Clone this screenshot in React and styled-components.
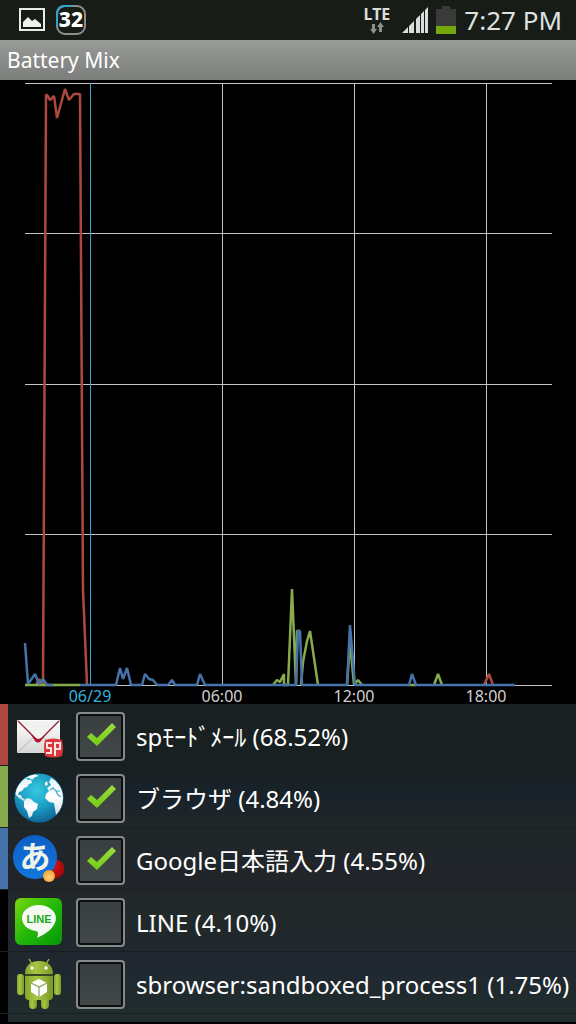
import React, { useState } from "react";
import styled, { createGlobalStyle } from "styled-components";

const COLORS = {
  red: "#ae483f",
  green: "#87aa4d",
  blue: "#4573a9",
  cyan: "#36a5d0",
  grid: "#c4c4c4",
};

const GRID_Y = [3, 153, 304, 454, 605];

const TICKS = [
  { x: 90, label: "06/29", active: true },
  { x: 222, label: "06:00" },
  { x: 354, label: "12:00" },
  { x: 486, label: "18:00" },
];

const SERIES = [
  {
    color: COLORS.red,
    d: "M36 605L39 599L43 604L46 15L47 15L50 20L54 16L57 38L65 9L69 20L74 14H80L83 510L87 605M484 605L489 594L493 605",
  },
  {
    color: COLORS.green,
    d: "M25 605H80M273 605L277 600L280 602L284 594V605H288L292 509L296 605L297 551L300 551M301 605L303 582L307 561L310 551L318 605M347 605L350 562L354 605L358 600L362 605M409 605H416M434 605L438 594L442 605",
  },
  {
    color: COLORS.blue,
    d: "M25 563L28 604L35 594L39 604L43 599L47 605H53M80 605H116L120 588L123 599L127 588L131 605M142 605L145 594L149 599L153 600L157 605M168 605L172 600L175 605M197 605L200 594L205 605M131 605H142M157 605H168M175 605H197M205 605H296L298 551H300L302 605H347L350 545L355 605H409L412 594L416 605H515",
  },
];

function MailIcon() {
  return (
    <Icon viewBox="0 0 52 52" aria-hidden="true">
      <defs>
        <linearGradient id="paper" x1="0" y1="0" x2="0" y2="1">
          <stop offset="0" stopColor="#ffffff" />
          <stop offset="1" stopColor="#d6d6d4" />
        </linearGradient>
      </defs>
      <rect x="4" y="9" width="43" height="33" rx="1" fill="url(#paper)" />
      <path d="M5 41L21 26M46 41L30 26" stroke="#b9b9b7" strokeWidth="1" />
      <path d="M5 10L21 27Q25 31 29 27L46 10Z" fill="#f1f1ef" />
      <path
        d="M5 10L22 27Q25 30 29 27L46 10"
        fill="none"
        stroke="#8e1230"
        strokeWidth="1.2"
      />
      <path d="M17 22L22 27Q25 30 29 27L34 22L28 30Q25 33 22 30Z" fill="#b3122f" />
      <path d="M32 29Q40 26 49 29Q51 37 49 45Q40 48 32 45Q30 37 32 29Z" fill="#da363c" />
      <path
        d="M39 32H34V37H38V42H33M42 45V32H47V38H42"
        fill="none"
        stroke="#ffe3df"
        strokeWidth="2"
      />
    </Icon>
  );
}

function GlobeIcon() {
  return (
    <Icon viewBox="0 0 52 52" aria-hidden="true">
      <defs>
        <radialGradient id="sea" cx="0.45" cy="0.35" r="0.7">
          <stop offset="0" stopColor="#35cbe0" />
          <stop offset="0.55" stopColor="#1a98c0" />
          <stop offset="1" stopColor="#0d5e91" />
        </radialGradient>
        <linearGradient id="land" x1="0" y1="0" x2="0" y2="1">
          <stop offset="0" stopColor="#e4f3f7" />
          <stop offset="0.5" stopColor="#ffffff" />
          <stop offset="1" stopColor="#cfdfe9" />
        </linearGradient>
        <clipPath id="globe">
          <circle cx="26" cy="25" r="24" />
        </clipPath>
      </defs>
      <circle cx="26" cy="25" r="24.5" fill="url(#sea)" />
      <g clipPath="url(#globe)" fill="url(#land)">
        <path d="M3 17L5 11L9 7L13 5L15 7L18 7L19 10L16 11L14 14L11 15L9 18L6 19L5 22L8 22L9 25L12 26L11 28L6 25L2 21Z" />
        <path d="M11 28L14 25L18 26L21 29L25 31L24 36L20 39L19 43L16 45L14 38L11 34Z" />
        <path d="M11 5L16 2L22 1L26 3L22 4L19 7L16 5Z" />
        <path d="M33 21L36 18L34 15L38 12L36 9L38 5L43 8L48 14L51 23L50 32L46 41L43 42L42 36L41 30L36 29L32 25Z" />
        <path d="M32 10L34 8L35 12L32 13Z" />
      </g>
      <path
        d="M37 17L40 15L43 18L47 18M43 18L45 22L48 24"
        fill="none"
        stroke="#3ba8c8"
        strokeWidth="1.2"
      />
    </Icon>
  );
}

function KanaIcon() {
  return (
    <Icon viewBox="0 0 52 52" aria-hidden="true">
      <defs>
        <linearGradient id="kana" x1="0" y1="0" x2="0" y2="1">
          <stop offset="0" stopColor="#0d5fc4" />
          <stop offset="1" stopColor="#1177dc" />
        </linearGradient>
        <radialGradient id="ruby" cx="0.4" cy="0.3" r="0.7">
          <stop offset="0" stopColor="#d91515" />
          <stop offset="1" stopColor="#9b0808" />
        </radialGradient>
        <radialGradient id="amber" cx="0.5" cy="0.6" r="0.6">
          <stop offset="0" stopColor="#ffd27a" />
          <stop offset="1" stopColor="#f2a02f" />
        </radialGradient>
      </defs>
      <circle cx="42" cy="34" r="9.5" fill="url(#ruby)" />
      <circle cx="22" cy="22" r="22" fill="url(#kana)" />
      <KanaText x="22" y="33" textAnchor="middle">
        あ
      </KanaText>
      <circle cx="36" cy="41" r="6" fill="url(#amber)" />
    </Icon>
  );
}

function LineIcon() {
  return (
    <Icon viewBox="0 0 52 52" aria-hidden="true">
      <defs>
        <linearGradient id="lime" x1="0" y1="0" x2="1" y2="1">
          <stop offset="0" stopColor="#78d80c" />
          <stop offset="0.5" stopColor="#24b80a" />
          <stop offset="1" stopColor="#079707" />
        </linearGradient>
      </defs>
      <rect x="2" y="1" width="47" height="47" rx="6" fill="url(#lime)" />
      <path
        d="M26 8C16 8 9 14 9 21C9 28 15 33 23 34C26 35 25 38 24 41C33 37 43 30 43 21C43 14 35 8 26 8Z"
        fill="#f4faf2"
      />
      <LineText x="26" y="26" textAnchor="middle">
        LINE
      </LineText>
    </Icon>
  );
}

function AndroidIcon() {
  return (
    <Icon viewBox="0 0 52 52" aria-hidden="true">
      <defs>
        <linearGradient id="robot" x1="0" y1="0" x2="1" y2="0">
          <stop offset="0" stopColor="#84a52c" />
          <stop offset="0.4" stopColor="#a9c745" />
          <stop offset="1" stopColor="#789925" />
        </linearGradient>
      </defs>
      <path d="M19 5L16 0M33 5L36 0" stroke="#9ebd3b" strokeWidth="1.3" />
      <path d="M12 15C12 6 18 2 26 2S40 6 40 15Z" fill="url(#robot)" />
      <circle cx="19" cy="9" r="1.7" fill="#fff" />
      <circle cx="33" cy="9" r="1.7" fill="#fff" />
      <g fill="url(#robot)">
        <rect x="4" y="15" width="7" height="21" rx="3" />
        <rect x="41" y="15" width="7" height="21" rx="3" />
        <rect x="16" y="32" width="8" height="18" rx="4" />
        <rect x="28" y="32" width="8" height="18" rx="4" />
        <path d="M12 17H40V37Q40 41 36 41H16Q12 41 12 37Z" />
      </g>
      <path d="M12 16H40" stroke="#4e6519" strokeWidth="1" />
      <path d="M26 20L34 24V33L26 38L18 33V24Z" fill="#fff" />
      <path d="M18 24L26 28L34 24M26 28V38" fill="none" stroke="#8da25a" strokeWidth="1.2" />
    </Icon>
  );
}

function BlueIcon() {
  return (
    <Icon viewBox="0 0 52 52" aria-hidden="true">
      <rect x="4" y="1" width="44" height="47" rx="4" fill="#1f4663" />
    </Icon>
  );
}

const APPS = [
  { name: "spﾓｰﾄﾞﾒｰﾙ (68.52%)", color: COLORS.red, checked: true, icon: <MailIcon /> },
  { name: "ブラウザ (4.84%)", color: COLORS.green, checked: true, icon: <GlobeIcon /> },
  { name: "Google日本語入力 (4.55%)", color: COLORS.blue, checked: true, icon: <KanaIcon /> },
  { name: "LINE (4.10%)", icon: <LineIcon /> },
  { name: "sbrowser:sandboxed_process1 (1.75%)", icon: <AndroidIcon /> },
  { name: "", icon: <BlueIcon /> },
];

function StatusBar() {
  return (
    <Status>
      <StatusGroup $gap={11}>
        <svg width="26" height="24" viewBox="0 0 26 24" aria-hidden="true">
          <rect x="1" y="1" width="24" height="21" fill="none" stroke="#e8ebe8" strokeWidth="2" />
          <path d="M4 19V14L9 9L13 13L16 11L22 16V19Z" fill="#f0f2f0" />
        </svg>
        <CountBadge>
          <svg width="30" height="30" viewBox="0 0 30 30" aria-hidden="true">
            <rect x="1" y="1" width="28" height="28" rx="8" fill="none" stroke="#8b908e" strokeWidth="2" />
            <path d="M1 21V9Q1 1 9 1H16" fill="none" stroke="#35a3c8" strokeWidth="2" />
          </svg>
          <span>32</span>
        </CountBadge>
      </StatusGroup>
      <StatusGroup $gap={8}>
        <Network>
          <span>LTE</span>
          <svg width="16" height="12" viewBox="0 0 16 12" aria-hidden="true">
            <path d="M3 2H6V7H8L4.500 12L1 7H3Z" fill="#8c8f8d" />
            <path d="M10 10H13V5H15L11.500 0L8 5H10Z" fill="#8c8f8d" />
          </svg>
        </Network>
        <SignalIcon width="26" height="26" viewBox="0 0 26 26" aria-hidden="true">
          <path
            d="M0 26L6 20V26ZM7 19L12 14V26H7ZM14 12L18 8V26H14ZM19 7L22 4V26H19ZM23 3L26 0V26H23Z"
            fill="#dadddb"
          />
        </SignalIcon>
        <svg width="20" height="28" viewBox="0 0 20 28" aria-hidden="true">
          <path d="M0 3H6V0H14V3H20V21H0Z" fill="#3a3a3a" />
          <path d="M0 20H20V28H0Z" fill="#74a80c" />
        </svg>
        <Clock>7:27 PM</Clock>
      </StatusGroup>
    </Status>
  );
}

function UsageChart() {
  return (
    <Chart viewBox="0 0 576 624" role="img" aria-label="Battery usage">
      <g stroke={COLORS.grid} strokeWidth="1" shapeRendering="crispEdges">
        {GRID_Y.map((y) => (
          <path key={y} d={`M25 ${y}H552`} />
        ))}
        {TICKS.map((tick) => (
          <path
            key={tick.label}
            d={`M${tick.x} 3V605`}
            stroke={tick.active ? COLORS.cyan : COLORS.grid}
          />
        ))}
      </g>
      {SERIES.map((line) => (
        <path
          key={line.color}
          d={line.d}
          fill="none"
          stroke={line.color}
          strokeWidth="2.500"
          strokeLinejoin="bevel"
        />
      ))}
      {TICKS.map((tick) => (
        <TickLabel key={tick.label} x={tick.x} y="622" textAnchor="middle" $active={tick.active}>
          {tick.label}
        </TickLabel>
      ))}
    </Chart>
  );
}

function AppRow(props) {
  const [checked, setChecked] = useState(Boolean(props.app.checked));

  return (
    <AppItem>
      <Row $color={props.app.color}>
        {props.app.icon}
        <CheckWrap>
          <CheckBox
            type="checkbox"
            checked={checked}
            onChange={(e) => setChecked(e.target.checked)}
          />
          {checked && (
            <CheckMark viewBox="0 0 49 49" aria-hidden="true">
              <defs>
                <linearGradient id="tick" x1="0" y1="0" x2="0" y2="1">
                  <stop offset="0" stopColor="#9bdd3f" />
                  <stop offset="1" stopColor="#72cc14" />
                </linearGradient>
              </defs>
              <path d="M11 25L15 21L21 26L36 11L40 15L21 34Z" fill="url(#tick)" />
            </CheckMark>
          )}
        </CheckWrap>
        <AppName>{props.app.name}</AppName>
      </Row>
    </AppItem>
  );
}

function App() {
  return (
    <Screen>
      <GlobalStyle />
      <StatusBar />
      <TitleBar>Battery Mix</TitleBar>
      <UsageChart />
      <AppList>
        {APPS.map((app) => (
          <AppRow key={app.name} app={app} />
        ))}
      </AppList>
    </Screen>
  );
}

const GlobalStyle = createGlobalStyle`
  * {
    box-sizing: border-box;
  }
  body {
    margin: 0;
    background: #000;
    color: #fff;
    font-family: "Noto Sans", "Noto Sans CJK JP", sans-serif;
  }
`;

const Screen = styled.main`
  display: flex;
  flex-direction: column;
  height: 100vh;
  overflow: hidden;
  padding-bottom: 2px;
`;

const Status = styled.header`
  display: flex;
  flex: none;
  align-items: center;
  justify-content: space-between;
  height: 40px;
  padding: 0 14px 0 19px;
  background: #171c17;
`;

const StatusGroup = styled.div`
  display: flex;
  align-items: center;
  gap: ${(props) => props.$gap}px;
`;

const CountBadge = styled.div`
  position: relative;
  height: 30px;

  span {
    position: absolute;
    inset: 0;
    font-size: 21px;
    font-weight: 800;
    line-height: 28px;
    text-align: center;
  }
`;

const Network = styled.div`
  display: flex;
  flex-direction: column;
  align-items: center;
  gap: 1px;
  color: #dadddb;
  font-size: 16px;
  font-weight: 700;
  line-height: 14px;
`;

const SignalIcon = styled.svg`
  margin-left: 4px;
`;

const Clock = styled.time`
  color: #dfe2e0;
  font-size: 26px;
  line-height: 40px;
`;

const TitleBar = styled.h1`
  flex: none;
  height: 40px;
  margin: 0;
  padding: 0 7px;
  background: linear-gradient(#9a9c99, #8b8d8a 45%, #7c7e7b);
  font-size: 21px;
  font-weight: 400;
  line-height: 40px;
`;

const Chart = styled.svg`
  display: block;
  flex: none;
  width: 100%;
  height: auto;
  overflow: visible;
`;

const TickLabel = styled.text`
  fill: ${(props) => (props.$active ? "#36b3de" : "#d0d0d0")};
  font-size: 16px;
`;

const AppList = styled.ul`
  flex: 1;
  min-height: 0;
  margin: 0;
  padding: 0;
  overflow: hidden;
  list-style: none;
  background: linear-gradient(
    #192020,
    #182021 20%,
    #18222a 28%,
    #1f2628 38%,
    #21252a 56%,
    #212929 66%,
    #202730 80%,
    #202c2e 95%
  );
`;

const AppItem = styled.li`
  border-bottom: 1px solid #191e20;
`;

const Row = styled.label`
  display: flex;
  align-items: center;
  gap: 11px;
  height: 61px;
  padding: 4px 0 0 5px;
  border-left: 8px solid ${(props) => props.$color || "#000"};
`;

const Icon = styled.svg`
  flex: none;
  width: 52px;
  height: 52px;
  overflow: visible;
`;

const KanaText = styled.text`
  fill: #eef3ea;
  font-family: "Noto Sans CJK JP", sans-serif;
  font-size: 31px;
  font-weight: 700;
`;

const LineText = styled.text`
  fill: #20a81a;
  font-family: "Liberation Sans", sans-serif;
  font-size: 11px;
  font-weight: 700;
`;

const CheckWrap = styled.div`
  position: relative;
  flex: none;
  width: 49px;
  height: 49px;
`;

const CheckBox = styled.input`
  display: block;
  width: 100%;
  height: 100%;
  margin: 0;
  appearance: none;
  border: 2px solid #858988;
  border-radius: 4px;
  background: linear-gradient(#393e40, #424748);
  box-shadow: inset 0 0 0 2px #0b0d0e;
  cursor: pointer;
`;

const CheckMark = styled.svg`
  position: absolute;
  inset: 0;
  pointer-events: none;
`;

const AppName = styled.span`
  font-size: 24px;
  line-height: 36px;
  white-space: nowrap;
`;

export default App;
